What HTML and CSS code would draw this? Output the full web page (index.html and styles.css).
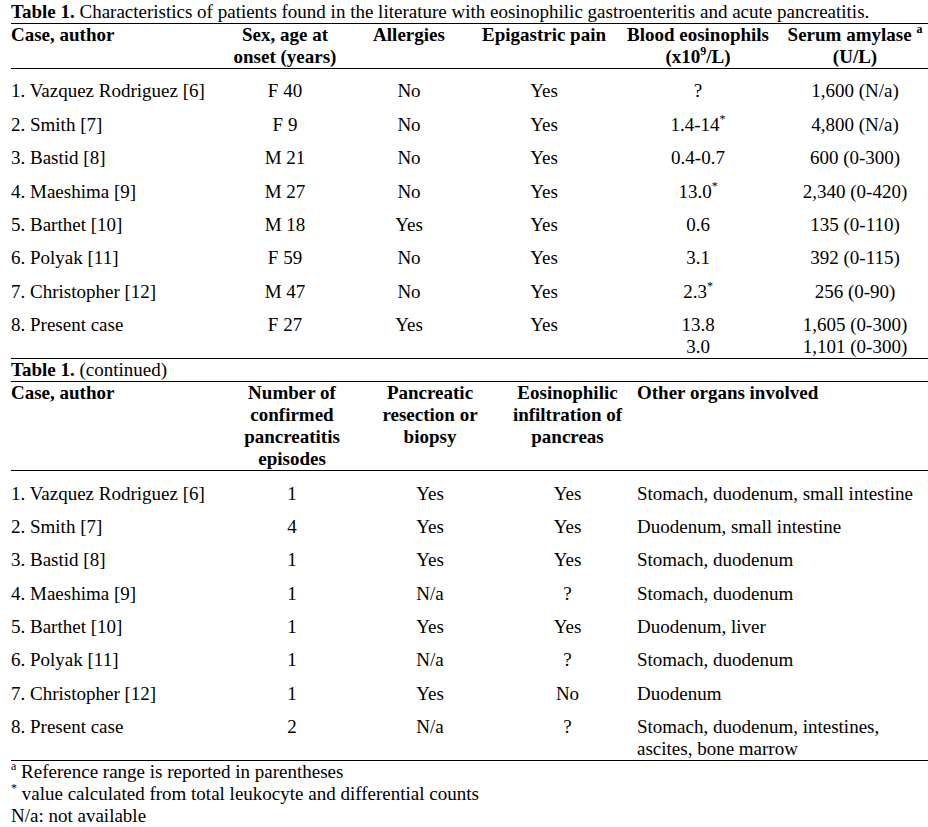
FILE: index.html
```html
<!DOCTYPE html>
<html lang="en">
<head>
<meta charset="utf-8">
<title>Table 1</title>
<link rel="stylesheet" href="styles.css">
</head>
<body>
<div class="page">
  <div class="caption"><b>Table 1.</b> Characteristics of patients found in the literature with eosinophilic gastroenteritis and acute pancreatitis.</div>
  <table class="data t1">
    <thead>
      <tr>
        <th class="c1 left">Case, author</th>
        <th class="w124">Sex, age at<br>onset (years)</th>
        <th class="w124">Allergies</th>
        <th class="w146">Epigastric pain</th>
        <th class="w162">Blood eosinophils<br>(x10<sup>9</sup>/L)</th>
        <th>Serum amylase <sup>a</sup><br>(U/L)</th>
      </tr>
    </thead>
    <tbody>
      <tr><td class="left">1. Vazquez Rodriguez [6]</td><td>F 40</td><td>No</td><td>Yes</td><td>?</td><td>1,600 (N/a)</td></tr>
      <tr><td class="left">2. Smith [7]</td><td>F 9</td><td>No</td><td>Yes</td><td>1.4-14<sup>*</sup></td><td>4,800 (N/a)</td></tr>
      <tr><td class="left">3. Bastid [8]</td><td>M 21</td><td>No</td><td>Yes</td><td>0.4-0.7</td><td>600 (0-300)</td></tr>
      <tr><td class="left">4. Maeshima [9]</td><td>M 27</td><td>No</td><td>Yes</td><td>13.0<sup>*</sup></td><td>2,340 (0-420)</td></tr>
      <tr><td class="left">5. Barthet [10]</td><td>M 18</td><td>Yes</td><td>Yes</td><td>0.6</td><td>135 (0-110)</td></tr>
      <tr><td class="left">6. Polyak [11]</td><td>F 59</td><td>No</td><td>Yes</td><td>3.1</td><td>392 (0-115)</td></tr>
      <tr><td class="left">7. Christopher [12]</td><td>M 47</td><td>No</td><td>Yes</td><td>2.3<sup>*</sup></td><td>256 (0-90)</td></tr>
      <tr><td class="left">8. Present case</td><td>F 27</td><td>Yes</td><td>Yes</td><td>13.8<br>3.0</td><td>1,605 (0-300)<br>1,101 (0-300)</td></tr>
    </tbody>
  </table>
  <div class="caption"><b>Table 1.</b> (continued)</div>
  <table class="data t2">
    <thead>
      <tr>
        <th class="c1 left">Case, author</th>
        <th class="w138">Number of<br>confirmed<br>pancreatitis<br>episodes</th>
        <th class="w138">Pancreatic<br>resection or<br>biopsy</th>
        <th class="w137">Eosinophilic<br>infiltration of<br>pancreas</th>
        <th class="left organs">Other organs involved</th>
      </tr>
    </thead>
    <tbody>
      <tr><td class="left">1. Vazquez Rodriguez [6]</td><td>1</td><td>Yes</td><td>Yes</td><td class="left organs">Stomach, duodenum, small intestine</td></tr>
      <tr><td class="left">2. Smith [7]</td><td>4</td><td>Yes</td><td>Yes</td><td class="left organs">Duodenum, small intestine</td></tr>
      <tr><td class="left">3. Bastid [8]</td><td>1</td><td>Yes</td><td>Yes</td><td class="left organs">Stomach, duodenum</td></tr>
      <tr><td class="left">4. Maeshima [9]</td><td>1</td><td>N/a</td><td>?</td><td class="left organs">Stomach, duodenum</td></tr>
      <tr><td class="left">5. Barthet [10]</td><td>1</td><td>Yes</td><td>Yes</td><td class="left organs">Duodenum, liver</td></tr>
      <tr><td class="left">6. Polyak [11]</td><td>1</td><td>N/a</td><td>?</td><td class="left organs">Stomach, duodenum</td></tr>
      <tr><td class="left">7. Christopher [12]</td><td>1</td><td>Yes</td><td>No</td><td class="left organs">Duodenum</td></tr>
      <tr><td class="left">8. Present case</td><td>2</td><td>N/a</td><td>?</td><td class="left organs">Stomach, duodenum, intestines,<br>ascites, bone marrow</td></tr>
    </tbody>
  </table>
  <div class="notes">
    <div><sup>a</sup> Reference range is reported in parentheses</div>
    <div><sup>*</sup> value calculated from total leukocyte and differential counts</div>
    <div>N/a: not available</div>
  </div>
</div>
</body>
</html>
```

FILE: styles.css
```css
html, body {
  margin: 0;
  padding: 0;
  background: #ffffff;
  overflow: hidden;
}

body {
  font-family: "Liberation Serif", "Times New Roman", serif;
  font-size: 19px;
  line-height: 22px;
  color: #000000;
}

.page {
  padding: 1px 0 0 11px;
}

.caption {
  height: 22px;
  white-space: nowrap;
}

.data {
  width: 920px;
  table-layout: fixed;
  border-collapse: separate;
  border-spacing: 0;
  border-top: 1px solid #000;
  border-bottom: 1px solid #000;
}

.data th {
  font-weight: bold;
  text-align: center;
  vertical-align: top;
  padding: 0;
  border-bottom: 1px solid #000;
  white-space: nowrap;
}

.data td {
  text-align: center;
  vertical-align: top;
  padding: 11.4px 0 0 0;
  white-space: nowrap;
}

.data .left {
  text-align: left;
}

.c1 { width: 212px; }
.w124 { width: 124px; }
.w146 { width: 146px; }
.w162 { width: 162px; }
.w138 { width: 138px; }
.w137 { width: 137px; }

.data .organs {
  padding-left: 1px;
}

sup {
  font-size: 12px;
  line-height: 0;
  vertical-align: 8px;
}

.notes div {
  height: 22px;
  white-space: nowrap;
}
```
